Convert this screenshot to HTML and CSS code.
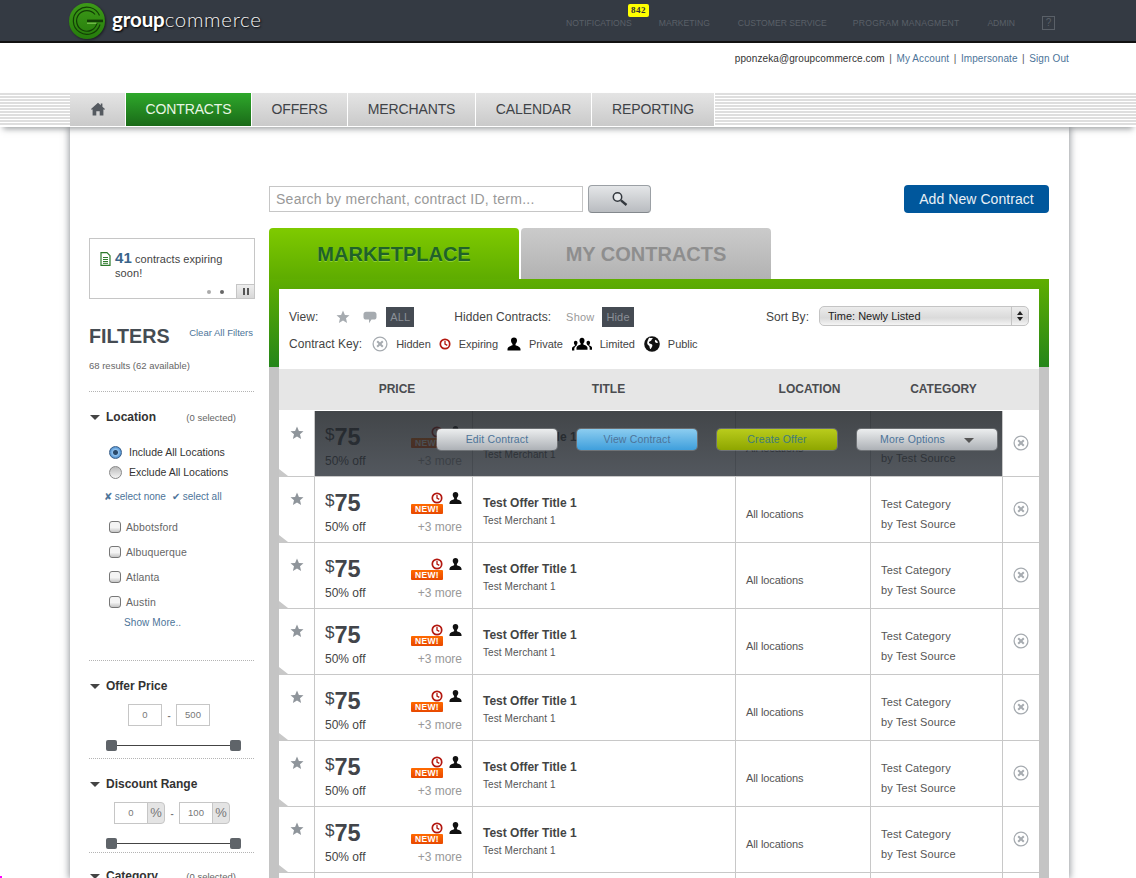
FILE: index.html
```html
<!DOCTYPE html>
<html lang="en">
<head>
<meta charset="utf-8">
<title>Group Commerce - Contracts</title>
<link rel="stylesheet" href="styles.css">
</head>
<body>
<svg class="defs" width="0" height="0" aria-hidden="true">
  <symbol id="i-star" viewBox="0 0 14 14"><path d="M7 .6l1.900 4.300 4.600.4-3.500 3 1.100 4.600L7 10.500l-4.100 2.400L4 8.300.5 5.300l4.600-.4z"/></symbol>
  <symbol id="i-x" viewBox="0 0 16 16"><circle cx="8" cy="8" r="6.900" fill="none" stroke="currentColor" stroke-width="1.300"/><path d="M5.200 5.200l5.600 5.600M10.800 5.200l-5.600 5.600" fill="none" stroke="currentColor" stroke-width="2"/></symbol>
  <symbol id="i-clock" viewBox="0 0 12 12"><circle cx="6" cy="6" r="4.700" fill="none" stroke="#b3170f" stroke-width="1.700"/><path d="M6 3v3.200l2.300 1.200" fill="none" stroke="#b3170f" stroke-width="1.300"/></symbol>
  <symbol id="i-person" viewBox="0 0 14 14"><path d="M7 .5c1.900 0 3 1.300 3 3.100 0 1.400-.7 2.700-1.500 3.400v1.300c1.500.5 4.700 1.500 5 3.700v1.500H.5V12c.3-2.200 3.500-3.200 5-3.700V7C4.700 6.300 4 5 4 3.600 4 1.800 5.100.5 7 .5z"/></symbol>
  <symbol id="i-people" viewBox="0 0 20 14"><path d="M10 .8c1.500 0 2.500 1.100 2.500 2.700 0 1.200-.5 2.300-1.200 2.900v1.200c1.600.6 3.900 1.300 4.200 3v2.200h-11v-2.200c.3-1.700 2.600-2.400 4.200-3V6.400c-.7-.6-1.200-1.700-1.200-2.900C7.500 1.900 8.500.8 10 .8z"/><path d="M3.700 3.800c1.100 0 1.800.9 1.800 2 0 .9-.4 1.700-.9 2.200v.7c-1.300.6-2.100 1.500-2.300 2.800v2H0v-2.300c.1-1.100 1.700-1.700 2.800-2.100V8c-.5-.5-.9-1.300-.9-2.200 0-1.100.7-2 1.800-2zM16.300 3.800c1.100 0 1.800.9 1.800 2 0 .9-.4 1.700-.9 2.200v.4c1.100.4 2.700 1 2.800 2.100v2.300h-2.300v-2c-.2-1.300-1-2.200-2.300-2.800V8c-.5-.5-.9-1.300-.9-2.200 0-1.100.7-2 1.800-2z"/></symbol>
  <symbol id="i-globe" viewBox="0 0 16 16"><circle cx="8" cy="8" r="7.800" fill="#111"/><path d="M5 1.800c1.200.2 2.400-.1 3.600.3.400.6-.5 1-1 1.500.2.600-.3 1.100-.9 1.300-.8.400-1.800.7-1.700 1.600-.2.800.7 1 1.300 1.200 1 .1 1.800.5 2 1.400.2 1-.3 1.800-.8 2.600-.5.700-.9 1.400-1.300 1.300-.6-.9-.5-2-.9-2.900-.7-.7-1.700-1.200-2-2.300-.2-1 .1-2.500.7-3.700.3-.7.6-1.400 1-2.100zM11.500 3.800c.9.500 1.800 1.300 2.300 2.300.2.600-.1 1.100-.8.900-.8-.1-1.500-.4-1.900-1.100-.3-.7-.3-1.500.4-2.100z" fill="#fff"/></symbol>
</svg>

<header class="topbar">
  <a class="logo" href="#">
    <svg class="logo-mark" width="38" height="38" viewBox="0 0 38 38" aria-hidden="true">
      <defs><linearGradient id="lg" x1="0" y1="0" x2="0" y2="1"><stop offset="0" stop-color="#3d9a18"/><stop offset="1" stop-color="#267c0c"/></linearGradient></defs>
      <circle cx="19" cy="19" r="18" fill="url(#lg)"/>
      <path d="M31.500 13.500A13.600 13.600 0 1 0 32 22.500" fill="none" stroke="#123f05" stroke-width="1.200"/>
      <path d="M27 12.500A10.300 10.300 0 1 0 29 21" fill="none" stroke="#123f05" stroke-width="1.200"/>
      <path d="M19 17.600h16v2.600H19z" fill="#123f05"/>
      <path d="M19 21.200h9.500" stroke="#8bd05f" stroke-width="1"/>
    </svg>
    <span class="wordmark"><b>group</b>commerce</span>
  </a>
  <nav class="topnav">
    <a href="#" class="topnav-item tn-notif">NOTIFICATIONS<span class="count">842</span></a>
    <a href="#" class="topnav-item">MARKETING</a>
    <a href="#" class="topnav-item tn-cust">CUSTOMER SERVICE</a>
    <a href="#" class="topnav-item tn-prog">PROGRAM MANAGMENT</a>
    <a href="#" class="topnav-item">ADMIN</a>
    <a href="#" class="help">?</a>
  </nav>
</header>

<div class="userbar">
  <span>pponzeka@groupcommerce.com</span><i>|</i><a href="#">My Account</a><i>|</i><a href="#">Impersonate</a><i>|</i><a href="#">Sign Out</a>
</div>

<nav class="mainnav">
  <a href="#" class="nav-item nav-home" aria-label="Home">
    <svg width="14" height="14" viewBox="0 0 14 14"><path d="M7 .8l2.800 2.500V1.600h1.600v3.100L14 7v.6h-1.600V13.500H8.700V9.200H5.300v4.300H1.600V7.600H0V7z" fill="#555a60"/></svg>
  </a>
  <a href="#" class="nav-item nav-active">CONTRACTS</a>
  <a href="#" class="nav-item nav-offers">OFFERS</a>
  <a href="#" class="nav-item nav-merchants">MERCHANTS</a>
  <a href="#" class="nav-item nav-calendar">CALENDAR</a>
  <a href="#" class="nav-item nav-reporting">REPORTING</a>
</nav>

<div class="page">
  <aside class="sidebar">
    <div class="ticker">
      <svg class="doc" width="11" height="14" viewBox="0 0 11 14"><path d="M1 .7h6l3 3v9.600H1z" fill="#fff" stroke="#2c7a2a" stroke-width="1.200"/><path d="M3 5.500h5M3 7.500h5M3 9.500h5M3 11.300h5" stroke="#2c7a2a"/></svg>
      <p><b>41</b> contracts expiring soon!</p>
      <span class="dots"><i class="dot"></i><i class="dot dot-on"></i></span>
      <span class="pause"><i></i><i></i></span>
    </div>

    <div class="filters-head">
      <h2>FILTERS</h2>
      <a href="#">Clear All Filters</a>
    </div>
    <p class="results">68 results (62 available)</p>

    <section class="filter filter-location">
      <h3 class="ftitle"><span class="tri"></span>Location<small>(0 selected)</small></h3>
      <label class="radio"><span class="rdot rdot-on"></span>Include All Locations</label>
      <label class="radio"><span class="rdot"></span>Exclude All Locations</label>
      <div class="selects"><a href="#">✘ select none</a><a href="#">✔ select all</a></div>
      <label class="check"><span class="cbox"></span>Abbotsford</label>
      <label class="check"><span class="cbox"></span>Albuquerque</label>
      <label class="check"><span class="cbox"></span>Atlanta</label>
      <label class="check"><span class="cbox"></span>Austin</label>
      <a href="#" class="show-more">Show More..</a>
    </section>

    <section class="filter filter-price">
      <h3 class="ftitle"><span class="tri"></span>Offer Price</h3>
      <div class="range range-price">
        <span class="rinput">0</span><span class="dash">-</span><span class="rinput">500</span>
      </div>
      <div class="slider"><i></i><i></i></div>
    </section>

    <section class="filter filter-discount">
      <h3 class="ftitle"><span class="tri"></span>Discount Range</h3>
      <div class="range range-discount">
        <span class="rinput">0</span><span class="pct">%</span><span class="dash">-</span><span class="rinput">100</span><span class="pct">%</span>
      </div>
      <div class="slider"><i></i><i></i></div>
    </section>

    <section class="filter filter-last">
      <h3 class="ftitle"><span class="tri"></span>Category<small>(0 selected)</small></h3>
    </section>
  </aside>

  <main class="content">
    <div class="searchrow">
      <div class="search">Search by merchant, contract ID, term...</div>
      <button class="search-btn" aria-label="Search">
        <svg width="18" height="16" viewBox="0 0 18 16"><circle cx="6.500" cy="6" r="4.200" fill="#e8eaec" stroke="#33383e" stroke-width="1.500"/><path d="M10 9.300l5.500 4.700" stroke="#33383e" stroke-width="2.400"/></svg>
      </button>
      <a href="#" class="add-btn">Add New Contract</a>
    </div>

    <div class="tabs">
      <a href="#" class="tab tab-on">MARKETPLACE</a>
      <a href="#" class="tab tab-off">MY CONTRACTS</a>
    </div>

    <div class="panel">
      <div class="panel-inner">
        <div class="tools tools-1">
          <span class="lbl">View:</span>
          <svg class="ico-star" width="14" height="14"><use href="#i-star"/></svg>
          <svg class="ico-bubble" width="14" height="13" viewBox="0 0 14 13"><path d="M3 .8h8c1.400 0 2.500 1 2.500 2.400v3c0 1.400-1.100 2.400-2.500 2.400H8.500L6 12.300V8.600H3C1.600 8.600.5 7.600.5 6.200v-3C.5 1.800 1.600.8 3 .8z"/></svg>
          <span class="pill pill-all">ALL</span>
          <span class="lbl lbl-hidden">Hidden Contracts:</span>
          <span class="plain">Show</span>
          <span class="pill">Hide</span>
          <span class="lbl lbl-sort">Sort By:</span>
          <div class="sortsel"><span>Time: Newly Listed</span><b></b></div>
        </div>
        <div class="tools tools-2">
          <span class="lbl">Contract Key:</span>
          <svg class="k-x" width="16" height="16"><use href="#i-x"/></svg><span class="k k-gap8">Hidden</span>
          <svg width="12" height="12"><use href="#i-clock"/></svg><span class="k k-gap9">Expiring</span>
          <svg width="14" height="14"><use href="#i-person"/></svg><span class="k k-gap10">Private</span>
          <svg width="20" height="14"><use href="#i-people"/></svg><span class="k k-gap9">Limited</span>
          <svg width="16" height="16"><use href="#i-globe"/></svg><span class="k">Public</span>
        </div>
      </div>
    </div>

    <div class="tablewrap">
      <div class="thead">
        <span></span><span class="th-price">PRICE</span><span class="th-title">TITLE</span><span class="th-loc">LOCATION</span><span class="th-cat">CATEGORY</span><span></span>
      </div>

      <article class="row">
        <div class="c c-star"><svg width="14" height="14"><use href="#i-star"/></svg></div>
        <div class="c c-price">
          <div class="p-left"><div class="amount"><sup>$</sup>75</div><div class="off">50% off</div></div>
          <div class="p-right"><div class="flags"><div class="stack"><svg width="12" height="12"><use href="#i-clock"/></svg><span class="new">NEW!</span></div><svg class="pers" width="14" height="14"><use href="#i-person"/></svg></div><div class="more">+3 more</div></div>
        </div>
        <div class="c c-title"><strong>Test Offer Title 1</strong><span>Test Merchant 1</span></div>
        <div class="c c-loc">All locations</div>
        <div class="c c-cat"><span>Test Category</span><span>by Test Source</span></div>
        <div class="c c-x"><svg width="16" height="16"><use href="#i-x"/></svg></div>
        <div class="overlay">
          <a href="#" class="ob ob-edit">Edit Contract</a>
          <a href="#" class="ob ob-view">View Contract</a>
          <a href="#" class="ob ob-create">Create Offer</a>
          <a href="#" class="ob ob-more">More Options<i></i></a>
        </div>
      </article>

      <article class="row">
        <div class="c c-star"><svg width="14" height="14"><use href="#i-star"/></svg></div>
        <div class="c c-price">
          <div class="p-left"><div class="amount"><sup>$</sup>75</div><div class="off">50% off</div></div>
          <div class="p-right"><div class="flags"><div class="stack"><svg width="12" height="12"><use href="#i-clock"/></svg><span class="new">NEW!</span></div><svg class="pers" width="14" height="14"><use href="#i-person"/></svg></div><div class="more">+3 more</div></div>
        </div>
        <div class="c c-title"><strong>Test Offer Title 1</strong><span>Test Merchant 1</span></div>
        <div class="c c-loc">All locations</div>
        <div class="c c-cat"><span>Test Category</span><span>by Test Source</span></div>
        <div class="c c-x"><svg width="16" height="16"><use href="#i-x"/></svg></div>
      </article>

      <article class="row">
        <div class="c c-star"><svg width="14" height="14"><use href="#i-star"/></svg></div>
        <div class="c c-price">
          <div class="p-left"><div class="amount"><sup>$</sup>75</div><div class="off">50% off</div></div>
          <div class="p-right"><div class="flags"><div class="stack"><svg width="12" height="12"><use href="#i-clock"/></svg><span class="new">NEW!</span></div><svg class="pers" width="14" height="14"><use href="#i-person"/></svg></div><div class="more">+3 more</div></div>
        </div>
        <div class="c c-title"><strong>Test Offer Title 1</strong><span>Test Merchant 1</span></div>
        <div class="c c-loc">All locations</div>
        <div class="c c-cat"><span>Test Category</span><span>by Test Source</span></div>
        <div class="c c-x"><svg width="16" height="16"><use href="#i-x"/></svg></div>
      </article>

      <article class="row">
        <div class="c c-star"><svg width="14" height="14"><use href="#i-star"/></svg></div>
        <div class="c c-price">
          <div class="p-left"><div class="amount"><sup>$</sup>75</div><div class="off">50% off</div></div>
          <div class="p-right"><div class="flags"><div class="stack"><svg width="12" height="12"><use href="#i-clock"/></svg><span class="new">NEW!</span></div><svg class="pers" width="14" height="14"><use href="#i-person"/></svg></div><div class="more">+3 more</div></div>
        </div>
        <div class="c c-title"><strong>Test Offer Title 1</strong><span>Test Merchant 1</span></div>
        <div class="c c-loc">All locations</div>
        <div class="c c-cat"><span>Test Category</span><span>by Test Source</span></div>
        <div class="c c-x"><svg width="16" height="16"><use href="#i-x"/></svg></div>
      </article>

      <article class="row">
        <div class="c c-star"><svg width="14" height="14"><use href="#i-star"/></svg></div>
        <div class="c c-price">
          <div class="p-left"><div class="amount"><sup>$</sup>75</div><div class="off">50% off</div></div>
          <div class="p-right"><div class="flags"><div class="stack"><svg width="12" height="12"><use href="#i-clock"/></svg><span class="new">NEW!</span></div><svg class="pers" width="14" height="14"><use href="#i-person"/></svg></div><div class="more">+3 more</div></div>
        </div>
        <div class="c c-title"><strong>Test Offer Title 1</strong><span>Test Merchant 1</span></div>
        <div class="c c-loc">All locations</div>
        <div class="c c-cat"><span>Test Category</span><span>by Test Source</span></div>
        <div class="c c-x"><svg width="16" height="16"><use href="#i-x"/></svg></div>
      </article>

      <article class="row">
        <div class="c c-star"><svg width="14" height="14"><use href="#i-star"/></svg></div>
        <div class="c c-price">
          <div class="p-left"><div class="amount"><sup>$</sup>75</div><div class="off">50% off</div></div>
          <div class="p-right"><div class="flags"><div class="stack"><svg width="12" height="12"><use href="#i-clock"/></svg><span class="new">NEW!</span></div><svg class="pers" width="14" height="14"><use href="#i-person"/></svg></div><div class="more">+3 more</div></div>
        </div>
        <div class="c c-title"><strong>Test Offer Title 1</strong><span>Test Merchant 1</span></div>
        <div class="c c-loc">All locations</div>
        <div class="c c-cat"><span>Test Category</span><span>by Test Source</span></div>
        <div class="c c-x"><svg width="16" height="16"><use href="#i-x"/></svg></div>
      </article>

      <article class="row">
        <div class="c c-star"><svg width="14" height="14"><use href="#i-star"/></svg></div>
        <div class="c c-price">
          <div class="p-left"><div class="amount"><sup>$</sup>75</div><div class="off">50% off</div></div>
          <div class="p-right"><div class="flags"><div class="stack"><svg width="12" height="12"><use href="#i-clock"/></svg><span class="new">NEW!</span></div><svg class="pers" width="14" height="14"><use href="#i-person"/></svg></div><div class="more">+3 more</div></div>
        </div>
        <div class="c c-title"><strong>Test Offer Title 1</strong><span>Test Merchant 1</span></div>
        <div class="c c-loc">All locations</div>
        <div class="c c-cat"><span>Test Category</span><span>by Test Source</span></div>
        <div class="c c-x"><svg width="16" height="16"><use href="#i-x"/></svg></div>
      </article>

      <article class="row">
        <div class="c"></div><div class="c"></div><div class="c"></div><div class="c"></div><div class="c"></div><div class="c c-x"></div>
      </article>
    </div>
  </main>
</div>
<span class="edge-mark"></span>
</body>
</html>
```

FILE: styles.css
```css
* { box-sizing: border-box; }
html, body { margin: 0; height: 878px; overflow: hidden; }
body { position: relative; background: #fff; font-family: "Liberation Sans", Arial, sans-serif; color: #444; }
a { text-decoration: none; color: inherit; }
.defs { position: absolute; }
h2, h3, p { margin: 0; }

/* top bar */
.topbar { height: 43px; display: flex; background: #343a43; border-bottom: 2px solid; border-image: linear-gradient(#777b80 50%, #111 50%) 1; padding-left: 68px; }
.logo { display: flex; align-items: flex-start; padding-top: 2px; }
.logo-mark { flex: none; filter: drop-shadow(1px 1px 1px rgba(0,0,0,.5)); }
.wordmark { width: 150px; margin: 4px 0 0 6px; font: 300 20.500px/26px Lato, sans-serif; color: #f2f2f2; text-shadow: 1px 1px 2px #000; letter-spacing: .68px; white-space: nowrap; }
.wordmark b { font-weight: 700; color: #fff; letter-spacing: -.1px; }
.topnav { display: flex; margin-left: 304px; font-size: 8.600px; color: #5a6068; }
.topnav-item { position: relative; margin-right: 28px; padding-top: 18px; line-height: 11px; white-space: nowrap; }
.tn-notif { margin-right: 27px; }
.tn-cust { margin-right: 26px; }
.tn-prog { letter-spacing: .23px; }
.count { position: absolute; left: 62px; top: 4px; width: 21px; height: 13px; background: #ff0; border-radius: 2px; color: #333; font: bold 9px/13px "Liberation Serif", serif; letter-spacing: .5px; text-align: center; }
.help { margin: 16px 0 0 -1px; width: 13px; height: 14px; border: 1px solid #5a6068; font-size: 10px; line-height: 12px; text-align: center; }

/* user row */
.userbar { height: 50px; display: flex; justify-content: flex-end; align-items: flex-start; padding: 10px 67px 0 0; font-size: 10px; line-height: 12px; color: #333; letter-spacing: .1px; }
.userbar a { color: #4d7499; }
.userbar i { font-style: normal; color: #555; margin: 0 4.500px; }

/* main nav */
.mainnav { position: relative; z-index: 2; height: 34px; display: flex; padding-left: 70px; border-bottom: 1px solid #fff; background: repeating-linear-gradient(#dedede 0 2px, #fff 2px 3px); box-shadow: 0 5px 6px -3px rgba(60,65,70,.5); }
.nav-item { display: flex; align-items: center; justify-content: center; height: 33px; padding-bottom: 1px; border-right: 1px solid #fff; font-size: 14px; letter-spacing: -.12px; color: #3f4347; background: linear-gradient(#e4e4e4, #cacaca); }
.nav-home { width: 56px; }
.nav-active { width: 126px; color: #e9f6e4; background: linear-gradient(#2ea82b, #1a6a18); }
.nav-offers { width: 96px; }
.nav-merchants { width: 128px; }
.nav-calendar { width: 116px; }
.nav-reporting { width: 123px; }

/* page */
.page { width: 999px; height: 751px; margin-left: 70px; overflow: hidden; display: grid; grid-template-columns: 166px 780px; column-gap: 14px; padding-left: 19px; background: #fff; box-shadow: 0 0 7px 1px rgba(60,65,75,.55); }

/* sidebar */
.sidebar { padding-top: 111px; }
.ticker { position: relative; height: 61px; border: 1px solid #c6c6c6; padding: 12px 0 0 10px; display: flex; gap: 4px; font-size: 11px; letter-spacing: .07px; color: #444; }
.doc { flex: none; margin-top: 1px; }
.ticker p { line-height: 14px; width: 124px; }
.ticker b { font-size: 15px; color: #39648a; }
.dots { position: absolute; right: 30px; bottom: 4px; display: flex; gap: 9px; }
.dot { width: 4px; height: 4px; border-radius: 50%; background: #aaa; }
.dot-on { background: #666; }
.pause { position: absolute; right: 0; bottom: 0; width: 18px; height: 14px; display: flex; gap: 2px; justify-content: center; align-items: center; background: linear-gradient(#eee, #d8d8d8); border: 1px solid #c6c6c6; border-width: 1px 0 0 1px; }
.pause i { width: 2px; height: 7px; background: #555; }

.filters-head { display: flex; justify-content: space-between; align-items: flex-start; margin-top: 24px; padding-right: 2px; }
.filters-head h2 { font-size: 19.700px; line-height: 26px; color: #454c53; }
.filters-head a { margin-top: 3px; font-size: 9.500px; line-height: 14px; color: #4d7499; }
.results { margin-top: 11px; font-size: 9.500px; line-height: 12px; color: #666; padding-bottom: 19px; }

.filter { width: 165px; border-top: 1px dotted #b4b4b4; }
.ftitle { position: relative; display: flex; align-items: center; height: 16px; padding-left: 17px; font-size: 12px; color: #333; }
.ftitle small { margin-left: auto; margin-right: 18px; font-size: 9.500px; font-weight: 400; color: #666; }
.tri { position: absolute; left: 1px; top: 6px; border: 5px solid transparent; border-top: 5px solid #444; border-bottom: 0; }
.filter-location { height: 269px; padding-top: 17px; }
.radio { display: flex; align-items: center; height: 20px; padding-left: 20px; font-size: 10.500px; color: #333; }
.radio:first-of-type { margin-top: 17px; }
.rdot { position: relative; width: 13px; height: 13px; margin-right: 7px; border-radius: 50%; border: 1px solid #888; background: linear-gradient(#bbb, #f4f4f4); }
.rdot-on { border-color: #3a5f8a; background: radial-gradient(#2b4a6b 0 2px, #8fc1ee 3px, #2f78bf 7px); }
.selects { display: flex; gap: 6px; margin: 9px 0 11px 15px; font-size: 10px; line-height: 12px; color: #4d7499; }
.check { display: flex; align-items: center; height: 25px; padding-left: 20px; font-size: 10.500px; letter-spacing: .12px; color: #666; }
.cbox { width: 12px; height: 12px; margin-right: 5px; border: 1px solid #777; border-radius: 3px; background: linear-gradient(#f4f4f4 55%, #c4c4c4); }
.show-more { display: block; margin: 3px 0 0 35px; font-size: 10px; letter-spacing: .1px; line-height: 12px; color: #4d7499; }

.filter-price { height: 98px; padding-top: 17px; }
.filter-discount { height: 94px; padding-top: 17px; }
.filter-last { padding-top: 15px; }
.range { display: flex; align-items: center; margin-top: 10px; font-size: 9.500px; color: #777; }
.range-price { padding-left: 39px; }
.range-discount { padding-left: 25px; margin-top: 10px; }
.rinput { width: 34px; height: 22px; border: 1px solid #c6c6c6; background: #fff; text-align: center; line-height: 20px; }
.dash { width: 14px; text-align: center; font-weight: bold; }
.pct { width: 18px; height: 22px; margin-left: -1px; border: 1px solid #c6c6c6; border-radius: 0 4px 4px 0; background: #e4e4e4; text-align: center; font-size: 13px; line-height: 20px; }
.slider { position: relative; width: 135px; height: 1px; margin: 19px 0 0 17px; background: #444; }
.slider i { position: absolute; top: -5px; width: 11px; height: 11px; border-radius: 2px; background: #5f6469; }
.slider i:first-child { left: 0; }
.slider i:last-child { right: 0; }

/* content */
.content { padding-top: 58px; min-width: 0; }
.searchrow { display: flex; align-items: flex-start; height: 43px; }
.search { width: 314px; height: 26px; margin-top: 1px; padding-left: 6px; border: 1px solid #c6c6c6; font-size: 14px; line-height: 24px; color: #999; letter-spacing: .26px; }
.search-btn { display: flex; align-items: center; justify-content: center; width: 63px; height: 28px; margin: 0 0 0 5px; padding: 0; border: 1px solid #9ba0a5; border-bottom-color: #83888d; border-radius: 4px; background: linear-gradient(#e4e6e8, #b9bcc0); }
.add-btn { margin-left: auto; width: 145px; height: 28px; border-radius: 4px; background: #00579c; color: #e9f0f6; font-size: 14px; letter-spacing: .06px; line-height: 28px; text-align: center; }

.tabs { display: flex; gap: 2px; height: 51px; }
.tab { width: 250px; border-radius: 4px 4px 0 0; font-size: 20px; font-weight: bold; line-height: 52px; text-align: center; }
.tab-on { background: linear-gradient(#7fca00, #5eac00); color: #20622a; text-shadow: 0 1px 0 rgba(180,230,100,.5); }
.tab-off { background: linear-gradient(#cbcbcb, #b2b2b2); color: #8e8e8e; }

.panel { height: 88px; padding: 10px 10px 0; background: linear-gradient(#5fae00, #24851a); }
.panel-inner { height: 78px; background: #fff; padding: 18px 10px 0; }
.tools { display: flex; align-items: center; height: 20px; font-size: 12px; color: #444; }
.tools-2 { margin-top: 7px; font-size: 11px; letter-spacing: -.06px; }
.lbl { font-size: 12px; letter-spacing: .04px; }
.ico-star { margin-left: 18px; fill: #a6abb0; }
.ico-bubble { margin-left: 13px; fill: #a6abb0; }
.pill { display: block; height: 20px; padding: 0 4px; background: #454b53; color: #8b9097; font-size: 11px; letter-spacing: .15px; line-height: 20px; }
.pill-all { margin-left: 9px; }
.lbl-hidden { margin-left: 40px; }
.plain { margin: 0 8px 0 15px; color: #999; font-size: 11px; letter-spacing: .2px; }
.lbl-sort { margin-left: auto; }
.sortsel { position: relative; width: 210px; height: 20px; margin: -2px 0 0 10px; border: 1px solid #c4c4c4; border-radius: 5px; padding-left: 8px; font-size: 11px; line-height: 18px; color: #222; background: linear-gradient(#ececec, #dadada 60%, #f4f4f4); }
.sortsel b { position: absolute; right: 0; top: 0; bottom: 0; width: 17px; border-left: 1px solid #c4c4c4; }
.sortsel b::before, .sortsel b::after { content: ""; position: absolute; left: 5px; border: 3px solid transparent; }
.sortsel b::before { top: 4px; border-bottom: 4px solid #222; border-top: 0; }
.sortsel b::after { bottom: 4px; border-top: 4px solid #222; border-bottom: 0; }
.k-x { margin-left: 10px; color: #a6abb0; }
.k { margin-left: 8px; }
.k-gap8 { margin-right: 8px; }
.k-gap9 { margin-right: 9px; }
.k-gap10 { margin-right: 9px; }

.tablewrap { height: 600px; padding: 2px 10px 0; background: #c4c4c4 linear-gradient(#fff, #fff) 10px 0/760px 2px no-repeat; }
.thead, .row { display: grid; grid-template-columns: 36px 158px 263px 135px 132px 36px; }
.thead { height: 42px; border-bottom: 1px solid #fff; background: #e6e6e6; font-size: 12px; font-weight: bold; line-height: 40px; text-align: center; color: #4a4c50; }
.th-price { padding-left: 6px; }
.th-title { padding-left: 8px; }
.th-loc { padding-left: 12px; }
.th-cat { padding-left: 13px; }
.row { position: relative; height: 66px; background: #fff; border-bottom: 1px solid #c8c8c8; }
.c { border-right: 1px solid #c8c8c8; }
.c-x { border-right: 0; display: flex; align-items: center; justify-content: center; color: #a6abb0; padding-bottom: 1px; }
.c-star { position: relative; display: flex; justify-content: center; padding-top: 15px; }
.c-star svg { fill: #8f959b; }
.c-star::after { content: ""; position: absolute; left: 0; bottom: 0; border-left: 9px solid #c8c8c8; border-top: 7px solid transparent; }
.c-price { display: flex; justify-content: space-between; padding: 0 10px; }
.amount { margin-top: 10px; font-size: 23.500px; font-weight: bold; line-height: 32px; color: #42454a; }
.amount sup { vertical-align: baseline; position: relative; top: -5px; font-size: 17px; font-weight: 400; }
.off { margin-top: -2px; font-size: 12px; line-height: 14px; }
.p-right { display: flex; flex-direction: column; align-items: flex-end; padding-top: 15px; }
.flags { display: flex; gap: 6px; }
.stack { display: flex; flex-direction: column; align-items: flex-end; }
.new { width: 32px; height: 10px; border-radius: 1px; background: linear-gradient(#ff6a00, #e84800); color: #fff; font-size: 8.500px; font-weight: bold; line-height: 10px; text-align: center; letter-spacing: .3px; }
.pers { width: 13px; fill: #111; margin-top: -1px; }
.more { margin-top: 6px; font-size: 12px; line-height: 14px; color: #999; }
.c-title { padding: 19px 0 0 10px; }
.c-title strong { display: block; font-size: 12px; line-height: 15px; color: #444; }
.c-title span { display: block; margin-top: 4px; font-size: 10px; letter-spacing: .1px; line-height: 12px; color: #555; }
.c-loc { padding: 30px 0 0 10px; font-size: 11px; letter-spacing: -.1px; line-height: 14px; color: #555; }
.c-cat { padding: 17px 0 0 10px; font-size: 11px; letter-spacing: .15px; line-height: 20px; color: #555; }
.c-cat span { display: block; }
.overlay { position: absolute; left: 36px; top: 0; width: 687px; height: 65px; display: flex; gap: 20px; padding: 18px 0 0 122px; background: linear-gradient(rgba(30,34,38,.84), rgba(40,46,54,.8)); }
.ob { display: flex; align-items: center; justify-content: center; width: 120px; height: 21px; padding-bottom: 1px; border-radius: 4px; font-size: 10.500px; letter-spacing: .15px; color: #4d7499; box-shadow: 0 0 0 1px rgba(255,255,255,.2); }
.ob-edit { background: linear-gradient(#eceeef, #adb1b6); }
.ob-view { background: linear-gradient(#8ccdf0, #3f9fdc); }
.ob-create { background: linear-gradient(#b9cc1c, #8ea600); color: #3e7c7c; }
.ob-more { width: 140px; gap: 19px; background: linear-gradient(#eceeef, #adb1b6); }
.ob-more i { border: 5px solid transparent; border-top: 5px solid #555; border-bottom: 0; margin-top: 2px; }
.edge-mark { position: absolute; left: 0; top: 876px; width: 2px; height: 2px; background: #f0f; }
```
